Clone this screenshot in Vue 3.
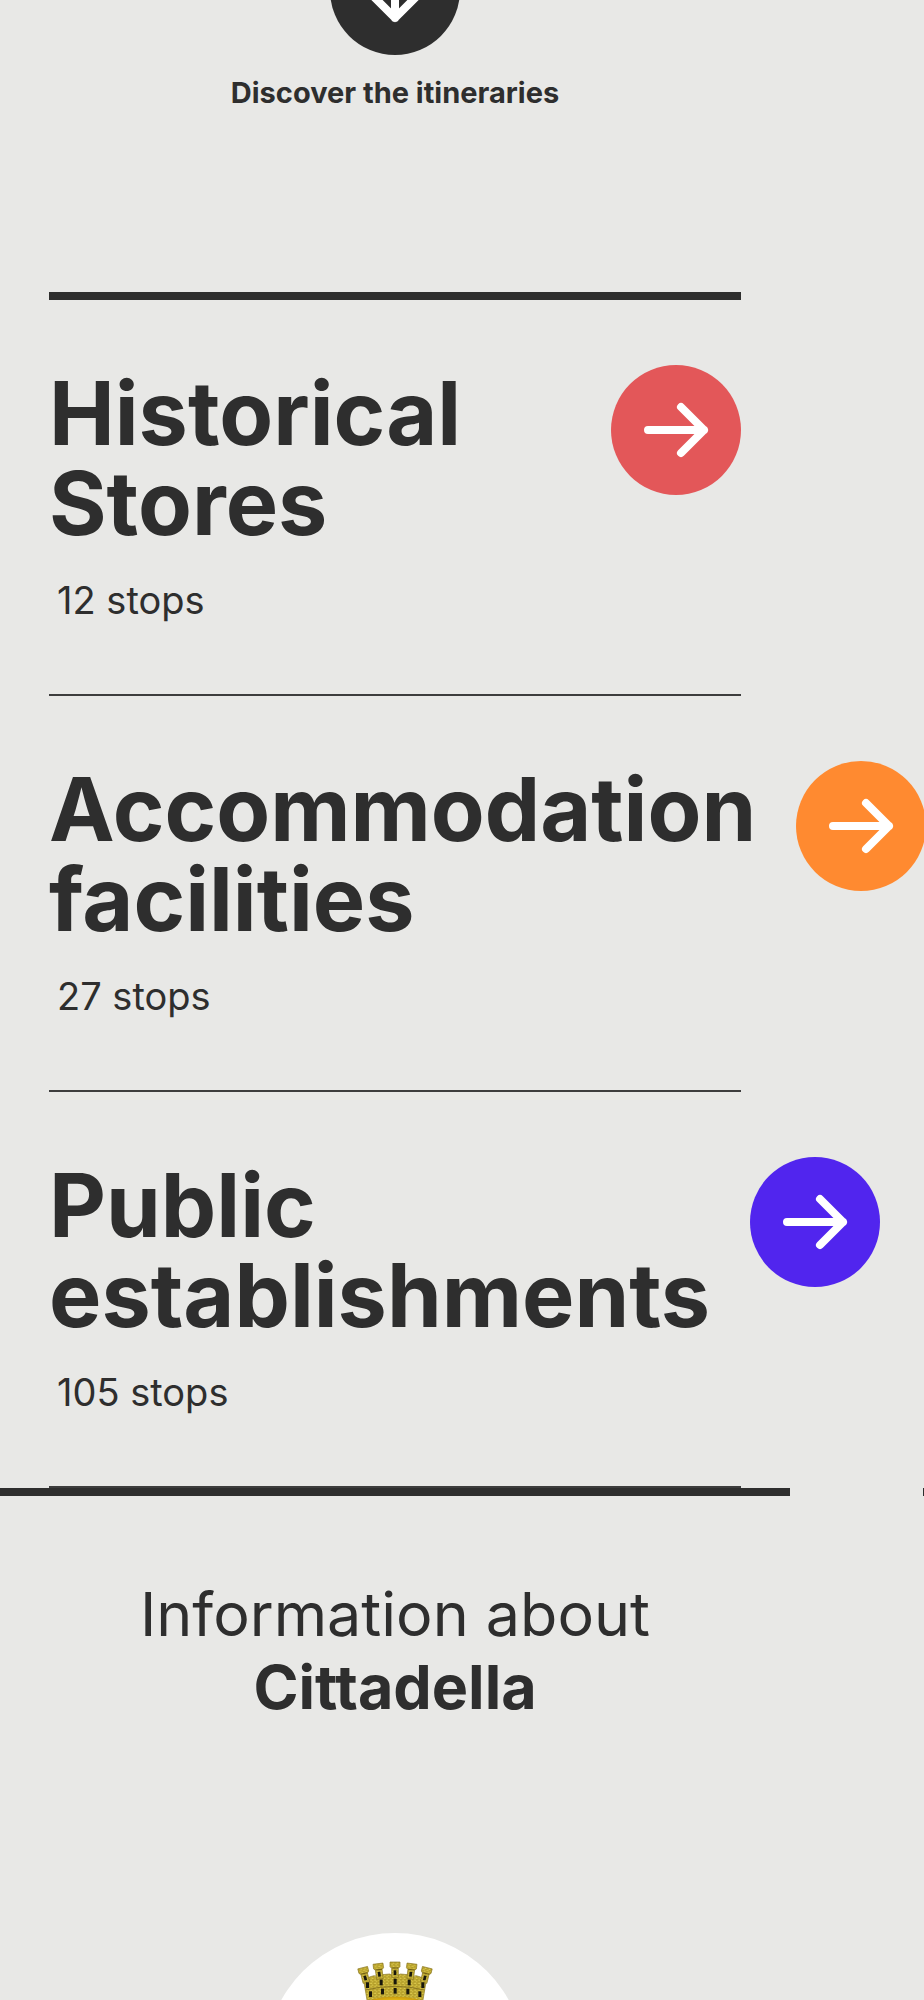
<script setup>
const itineraries = [
  { id: 'stores', title: ['Historical', 'Stores'], stops: 12 },
  { id: 'facilities', title: ['Accommodation', 'facilities'], stops: 27 },
  { id: 'public', title: ['Public', 'establishments'], stops: 105 }
]

// crown towers: centre x, top y, tilt in degrees
const towers = [
  { x: 338, y: 141, tilt: -14 },
  { x: 384, y: 129, tilt: -7 },
  { x: 435, y: 124, tilt: 0 },
  { x: 486, y: 129, tilt: 7 },
  { x: 532, y: 141, tilt: 14 }
]

const windows = [
  [352, 193], [393, 185], [435, 182], [477, 185], [518, 193],
  [361, 220], [397, 212], [435, 210], [473, 212], [509, 220]
]
</script>

<template>
  <div class="page">
    <main class="slide">
      <section class="hero">
        <a class="discover" href="#itineraries">
          <span class="circle">
            <svg class="arrow arrow-down" viewBox="0 0 130 130" aria-hidden="true">
              <path d="M37 65H93M70 42L93 65L70 88" />
            </svg>
          </span>
          <span class="discover-label">Discover the itineraries</span>
        </a>
      </section>

      <section id="itineraries" class="itineraries">
        <a
          v-for="item in itineraries"
          :key="item.id"
          class="itinerary"
          :href="'#' + item.id"
        >
          <div class="itinerary-text">
            <h2 class="itinerary-title">
              <span v-for="line in item.title" :key="line">{{ line }}</span>
            </h2>
            <p class="itinerary-stops">{{ item.stops }} stops</p>
          </div>
          <span class="circle" :class="'circle-' + item.id">
            <svg class="arrow" viewBox="0 0 130 130" aria-hidden="true">
              <path d="M37 65H93M70 42L93 65L70 88" />
            </svg>
          </span>
        </a>
      </section>

      <section class="info">
        <h2 class="info-title">
          Information about
          <strong>Cittadella</strong>
        </h2>
        <svg class="emblem" viewBox="45 37 780 780" role="img" aria-label="Cittadella">
          <defs>
            <pattern id="bricks" width="12" height="10" patternUnits="userSpaceOnUse">
              <rect width="12" height="10" fill="#cdb738" />
              <path d="M0 1H12M0 6H12M3 1V6M9 6V11" stroke="#9a841c" stroke-width="1.5" />
              <path d="M5 3H9M1 8H6" stroke="#eadb60" stroke-width="2" />
            </pattern>
            <radialGradient id="gold">
              <stop offset="0" stop-color="#ffdf22" />
              <stop offset="1" stop-color="#c99a0c" />
            </radialGradient>
          </defs>
          <circle cx="435" cy="427" r="390" fill="#fff" />
          <path
            d="M341 178Q352 180 358 169L372 165Q384 172 396 162L419 160Q435 170 451 160L474 162Q486 172 498 165L512 169Q518 180 529 178L518 244H352Z"
            fill="url(#bricks)"
            stroke="#8a7620"
            stroke-width="2"
          />
          <g
            v-for="t in towers"
            :key="t.x"
            :transform="`translate(${t.x} ${t.y}) rotate(${t.tilt})`"
          >
            <path
              d="M-15 0H15V14L10 19V46H-10V19L-15 14Z"
              fill="url(#bricks)"
              stroke="#8a7620"
              stroke-width="2"
            />
            <path d="M-10 18H10" stroke="#6d5c14" stroke-width="3" />
            <rect x="-4" y="25" width="8" height="14" fill="#17160c" />
          </g>
          <path d="M347 208Q435 186 523 208" fill="none" stroke="#8a7620" stroke-width="3" />
          <rect
            v-for="[x, y] in windows"
            :key="x + '-' + y"
            :x="x - 4"
            :y="y - 8"
            width="9"
            height="17"
            fill="#17160c"
          />
          <ellipse cx="435" cy="250" rx="84" ry="22" fill="url(#gold)" />
        </svg>
      </section>
    </main>

    <div class="next-slide"></div>
  </div>
</template>

<style>
body {
  background: #e8e8e6;
}
</style>

<style scoped>
.page {
  display: grid;
  grid-template-columns: minmax(0, 1fr) 1px;
  column-gap: 133px;
  height: 100vh;
  overflow: hidden;
  background: #e8e8e6;
  color: #2e2e2e;
  font-family: Inter, "Liberation Sans", sans-serif;
}

.slide {
  display: flex;
  flex-direction: column;
}

.hero {
  display: flex;
  justify-content: center;
  margin-top: -75px;
  padding-bottom: 179px;
}

.discover {
  display: flex;
  flex-direction: column;
  align-items: center;
  gap: 18px;
  color: inherit;
  text-decoration: none;
}

.discover-label {
  font-size: 29px;
  line-height: 40px;
  font-weight: 700;
}

.circle {
  flex-shrink: 0;
  width: 130px;
  height: 130px;
  border-radius: 50%;
  background: #2e2e2e;
}
.circle-stores { background: #e35759; }
.circle-facilities { background: #ff8a30; }
.circle-public { background: #5125ee; }

.arrow {
  display: block;
  width: 100%;
  height: 100%;
  fill: none;
  stroke: #fff;
  stroke-width: 8;
  stroke-linecap: round;
  stroke-linejoin: round;
}
.arrow-down { transform: rotate(90deg); }

.itineraries {
  margin: 0 49px;
  border-top: 8px solid #2e2e2e;
}

.itinerary {
  display: flex;
  justify-content: space-between;
  align-items: flex-start;
  gap: 40px;
  padding: 65px 0 69px;
  border-bottom: 2px solid #3d3d3d;
  color: inherit;
  text-decoration: none;
}

.itinerary-text {
  padding-top: 3px;
}

.itinerary-title {
  margin: 0;
  font-size: 88px;
  line-height: 90px;
  font-weight: 700;
}
.itinerary-title span { display: block; }

.itinerary-stops {
  margin: 27px 0 0;
  padding-left: 8px;
  font-size: 38px;
  line-height: 50px;
}

.info {
  display: flex;
  flex-direction: column;
  align-items: center;
  border-top: 8px solid #2e2e2e;
  padding-top: 82px;
}

.info-title {
  margin: 0;
  font-size: 61px;
  line-height: 73px;
  font-weight: 400;
  text-align: center;
}
.info-title strong {
  display: block;
  font-weight: 700;
}

.emblem {
  flex-shrink: 0;
  width: 260px;
  height: 260px;
  margin-top: 209px;
}

.next-slide {
  margin-top: 1488px;
  border-top: 8px solid #2e2e2e;
}
</style>
